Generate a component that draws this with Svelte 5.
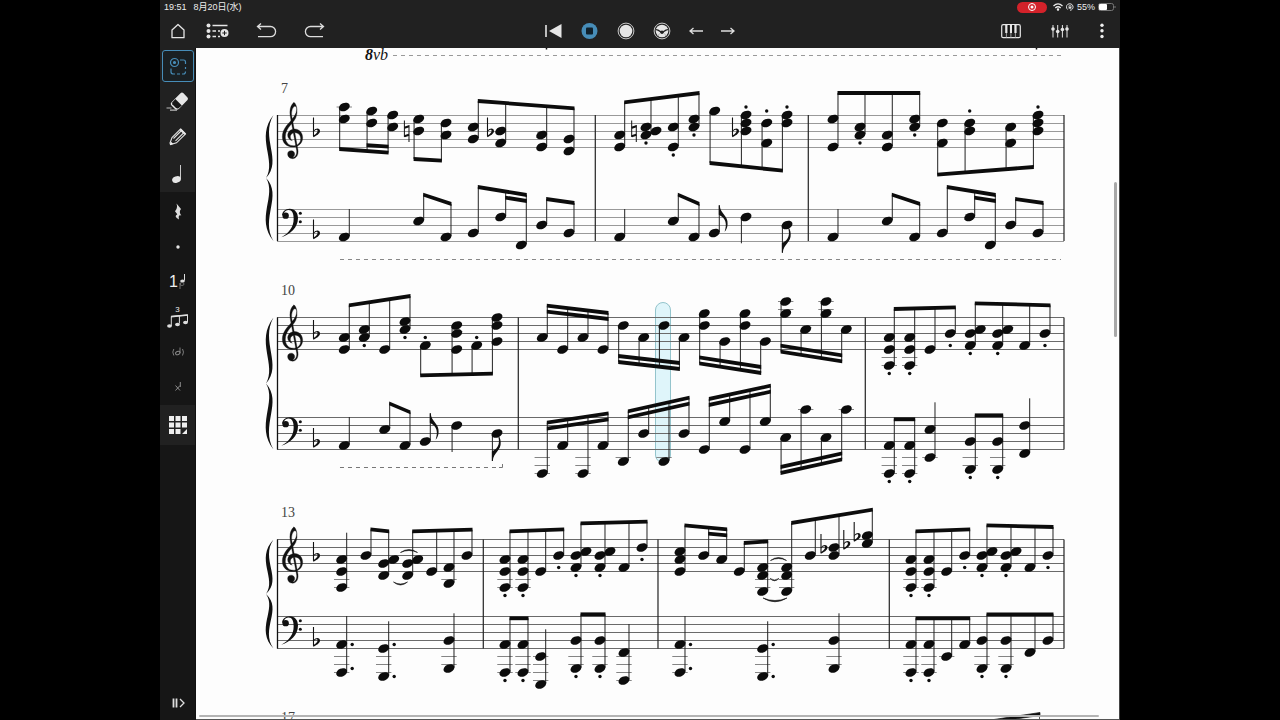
<script>
  const UP = 1;
  const DOWN = -1;
  const STAFF_LEFT = 277;
  const STAFF_RIGHT = 1064;

  // note: [x, staff steps below the top line, staccato step, step of the displaced head]
  // group: [direction, beam y at first stem, beam y at last stem, beams, notes, first note of a partial second beam]
  // single: [direction, stem end y, x, steps, options]
  const bassPattern = (x) => [
    [UP, 187, 195, 1, [[x, [6]], [x + 27.4, [2]], [x + 48, [9]]], 1],
    [UP, 199, 203, 1, [[x + 68.4, [4]], [x + 95.7, [6]]]]
  ];

  const systems = [
    {
      number: '7', numberY: 93, treble: 115, bass: 209, tone: '#999',
      bars: [595.3, 808.3],
      trebleGroups: [
        [DOWN, 149, 152.7, 1, [[344.3, [-2, 1]], [371.7, [-1, 2]], [392.7, [0, 3]]], 1],
        [DOWN, 159, 160.7, 1, [[418.7, [1, 4]], [446, [2, 5]]]],
        [UP, 101, 108.3, 1, [[473.3, [3, 6]], [500.7, [4, 7]], [541.7, [5, 8]], [569, [6, 9]]]],
        [UP, 102.3, 93, 1, [[619.7, [5, 8]], [646, [3, 5], 7, 4], [673.3, [3, 8], 10], [694, [1, 3], 5]]],
        [DOWN, 163, 170.7, 1, [[714.7, [-1]], [746, [0, 2, 4], -2], [766.7, [2, 7], -1], [787, [0, 2], -2]]],
        [UP, 93, 93, 1, [[833, [1, 8]], [860, [3, 5], 7], [887.3, [5, 8]], [914.7, [1, 3], 5]]],
        [DOWN, 174.7, 167, 1, [[942.3, [2, 7]], [969.7, [2, 4], -1], [1010.7, [3, 7]], [1038, [0, 2, 4], -2]]]
      ],
      bassGroups: [
        [UP, 194.7, 204, 1, [[418.7, [3]], [446, [7]]]],
        ...bassPattern(473.3),
        [UP, 194.7, 204, 1, [[673.3, [3]], [694, [7]]]],
        [UP, 194.7, 204, 1, [[887.3, [3]], [914.7, [7]]]],
        ...bassPattern(942.3)
      ],
      trebleSingles: [],
      bassSingles: [
        [UP, 209, 344.3, [7]], [UP, 209, 619.7, [7]], [UP, 205.3, 714.3, [6], { flag: true }],
        [DOWN, 243.3, 746, [2]], [DOWN, 252.7, 787, [4], { flag: true }], [UP, 209, 833, [7]]
      ],
      flats: [[490, 4], [735, 4]],
      naturals: [[406.7, 4], [634, 4]],
      ties: []
    },
    {
      number: '10', numberY: 295, treble: 317.5, bass: 417.5, tone: '#6a6a6a',
      bars: [518.3, 865.3],
      trebleGroups: [
        [UP, 305.3, 296, 1, [[344.3, [5, 8]], [364.3, [3, 5], 7], [384.7, [8]], [405, [1, 3], 5]]],
        [DOWN, 375.3, 373.7, 1, [[425.3, [7], 5], [456.7, [2, 4, 8]], [476.7, [7], 5], [497, [0, 2, 6]]]],
        [UP, 305.7, 313, 2, [[542.3, [5]], [562.7, [8]], [583, [5]], [603, [8]]]],
        [DOWN, 362, 369, 2, [[623.3, [2]], [643.7, [5]], [664, [2]], [684, [5]]]],
        [DOWN, 363.3, 373, 2, [[704.3, [-1, 2]], [724.7, [6]], [745, [-1, 2]], [765.3, [6]]]],
        [DOWN, 351.7, 361.3, 2, [[785.7, [-4, -1]], [805.7, [3]], [826, [-4, -1]], [846.3, [3]]]],
        [UP, 309, 307.3, 1, [[889.3, [5, 8, 12], 14], [909.7, [5, 8, 12], 14], [930, [8]], [950.3, [4], 7]]],
        [UP, 303.3, 305.3, 1, [[970.3, [4, 7], 9, 3], [997.7, [4, 7], 9, 3], [1024.7, [7]], [1045, [4], 7]]]
      ],
      bassGroups: [
        [UP, 403.3, 412.3, 1, [[384.7, [3]], [405, [7]]]],
        [UP, 422.7, 413.3, 2, [[542.3, [14]], [562.7, [7]], [583, [14]], [603, [7]]]],
        [UP, 411.3, 397.7, 2, [[623.3, [11]], [643.7, [4]], [664, [11]], [684, [4]]]],
        [UP, 399, 385.7, 2, [[704.3, [8]], [724.7, [1]], [745, [8]], [765.3, [1]]]],
        [DOWN, 473, 459.3, 2, [[785.7, [5]], [805.7, [-2]], [826, [5]], [846.3, [-2]]]],
        [UP, 419.3, 419.3, 1, [[889.3, [7, 14], 16], [909.7, [7, 14], 16]]],
        [UP, 415.3, 415.3, 1, [[970.3, [6, 13], 15], [997.7, [6, 13], 15]]]
      ],
      trebleSingles: [],
      bassSingles: [
        [UP, 417, 344.3, [7]], [UP, 413.3, 425.3, [6], { flag: true }], [DOWN, 452, 456.7, [2]],
        [DOWN, 461, 497, [4], { flag: true }], [UP, 402.3, 930, [3, 10]], [UP, 398.3, 1024.7, [2, 9]]
      ],
      flats: [], naturals: [], ties: []
    },
    {
      number: '13', numberY: 517, treble: 539.5, bass: 616.5, tone: '#6a6a6a',
      bars: [483.3, 658, 889.3],
      trebleGroups: [
        [UP, 529.3, 531.3, 1, [[366, [4]], [383.7, [6, 9], null, 5]]],
        [UP, 531.3, 529.7, 1, [[407.7, [6, 9], null, 5], [431.7, [8]], [449, [7, 11]], [467, [4]]]],
        [UP, 531.3, 529.3, 1, [[505, [5, 8, 12], 14], [523, [5, 8, 12], 14], [540.7, [8]], [558.7, [4], 7]]],
        [UP, 523.3, 521.7, 1, [[576, [4, 7], 9, 3], [600, [4, 7], 9, 3], [624, [7]], [642, [2], 5]]],
        [UP, 525.3, 529.3, 1, [[680, [3, 5, 8]], [703.7, [4]], [721.7, [5]]], 1],
        [UP, 543, 541.3, 1, [[739.3, [8]], [762.7, [7, 9, 13]]]],
        [UP, 523, 509.7, 1, [[786.7, [7, 9, 13]], [810.3, [4]], [834, [2, 4]], [867.3, [-1, 1]]]],
        [UP, 531.3, 529.3, 1, [[911, [5, 8, 12], 14], [929, [5, 8, 12], 14], [946.7, [8]], [964.7, [4], 7]]],
        [UP, 525.3, 527, 1, [[982, [4, 7], 9, 3], [1006, [4, 7], 9, 3], [1030, [7]], [1048, [4], 7]]]
      ],
      bassGroups: [
        [UP, 618.3, 618.3, 1, [[505, [7, 14], 16], [523, [7, 14], 16]]],
        [UP, 614.3, 614.3, 1, [[576, [6, 13], 15], [600, [6, 13], 15]]],
        [UP, 618.3, 618.3, 1, [[911, [7, 14], 16], [929, [7, 14], 16], [946.7, [10]], [964.7, [7]]]],
        [UP, 614.3, 614.3, 1, [[982, [6, 13], 15], [1006, [6, 13], 15], [1030, [9]], [1048, [6]]]]
      ],
      trebleSingles: [[UP, 532.7, 341.7, [5, 8, 12]]],
      bassSingles: [
        [UP, 616, 341.7, [7, 14], { dots: [7, 13] }], [UP, 621.3, 383.7, [8, 15], { dots: [7, 15] }],
        [UP, 613.3, 449, [6, 13]], [UP, 629.3, 540.7, [10, 17]], [UP, 624, 624, [9, 16]],
        [UP, 616, 680, [7, 14], { dots: [7, 13] }], [UP, 621.3, 762.7, [8, 15], { dots: [7, 15] }],
        [UP, 613.3, 834, [6, 13]]
      ],
      flats: [[823.5, 2], [846.3, 1], [856.7, -1]],
      naturals: [],
      ties: [[400.5, 417.5, 552.5, -4], [393.5, 407.5, 582, 4], [770.5, 786.5, 560.5, -4], [770, 779, 578.5, 3], [763, 787, 598, 5]]
    }
  ];

  const stemX = (x, dir) => x + (dir === UP ? 5 : -4.6);

  function ledgersFor(x, steps, top) {
    const lines = [];
    const low = Math.max(...steps);
    const high = Math.min(...steps);
    for (let p = 10; p <= low; p += 2) lines.push([x, top + p * 4]);
    for (let p = -2; p >= high; p -= 2) lines.push([x, top + p * 4]);
    return lines;
  }

  function engrave(top, groups, singles) {
    const out = { heads: [], stems: [], beams: [], dots: [], ledgers: [], flags: [] };
    const bar = (x1, y1, x2, y2) =>
      `${x1 - 0.5},${y1 - 1.9} ${x2 + 0.5},${y2 - 1.9} ${x2 + 0.5},${y2 + 1.9} ${x1 - 0.5},${y1 + 1.9}`;
    for (const [dir, y1, y2, count, notes, partial] of groups) {
      const a = stemX(notes[0][0], dir);
      const b = stemX(notes[notes.length - 1][0], dir);
      const at = (x) => y1 + ((y2 - y1) * (x - a)) / (b - a);
      out.beams.push(bar(a, y1, b, y2));
      const from = count === 2 ? 0 : partial;
      if (from !== undefined) {
        const c = stemX(notes[from][0], dir);
        out.beams.push(bar(c, at(c) + 6 * dir, b, y2 + 6 * dir));
      }
      for (const [x, steps, dot, displaced] of notes) {
        const s = stemX(x, dir);
        const base = top + 4 * (dir === UP ? Math.max(...steps) : Math.min(...steps));
        out.stems.push([s, base - dir, at(s)]);
        for (const p of steps) out.heads.push([x, top + p * 4]);
        if (displaced != null) out.heads.push([x + 10, top + displaced * 4]);
        if (dot != null) out.dots.push([x, top + dot * 4]);
        out.ledgers.push(...ledgersFor(x, steps, top));
      }
    }
    for (const [dir, end, x, steps, options = {}] of singles) {
      const s = stemX(x, dir);
      const base = top + 4 * (dir === UP ? Math.max(...steps) : Math.min(...steps));
      out.stems.push([s, base - dir, end]);
      for (const p of steps) out.heads.push([x, top + p * 4]);
      for (const p of options.dots ?? []) out.dots.push([x + 10.5, top + p * 4]);
      if (options.flag) out.flags.push([s, end, dir]);
      out.ledgers.push(...ledgersFor(x, steps, top));
    }
    return out;
  }

  function brace(t, b) {
    const h = b - t;
    const m = t + h / 2;
    return `M273.5 ${t}C255 ${t + h * 0.18} 277 ${t + h * 0.36} 266 ${m}C283 ${t + h * 0.36} 260 ${t + h * 0.18} 273.5 ${t}Z` +
      `M273.5 ${b}C255 ${b - h * 0.18} 277 ${b - h * 0.36} 266 ${m}C283 ${b - h * 0.36} 260 ${b - h * 0.18} 273.5 ${b}Z`;
  }

  const score = systems.map((s) => ({
    ...s,
    bottom: s.bass + 32,
    parts: [engrave(s.treble, s.trebleGroups, s.trebleSingles), engrave(s.bass, s.bassGroups, s.bassSingles)]
  }));
</script>

{#snippet flat(x, y)}
  <g transform="translate({x} {y})">
    <path d="M-2.5 -13.5V5.300" fill="none" stroke="#111" stroke-width="1.100" />
    <path d="M-2.400 -.2C-.4 -3.200 4.200 -3.200 4 .3C3.800 2.800 .5 4.900 -2.800 6.200V4.600C-.6 3.400 1.600 1.800 1.600 0C1.600 -2 -.8 -1.500 -2.400 1.200Z" fill="#111" />
  </g>
{/snippet}

{#snippet clef(kind, top)}
  {#if kind === 'treble'}
    <path transform="translate(160 {top - 115}) scale(.33333)" fill="#111" stroke="#111" stroke-width="1" d="M402 307C412 314 416 344 403 361C392 376 377 388 376 410C376 427 386 437 400 437C413 437 422 429 422 416C422 404 414 398 405 398C396 398 391 404 391 410C391 416 394 419 397 422C388 420 383 413 383 405C384 394 393 387 404 387C418 387 428 399 428 413C428 430 415 441 399 441C380 441 367 429 367 410C367 390 380 376 392 363C400 353 410 342 410 328C410 321 407 318 404 319C397 322 394 334 395 346L414 450C416 466 408 476 398 476C389 476 383 470 383 462C383 455 388 452 394 452C400 452 404 457 404 462C404 467 401 470 398 472C406 472 411 464 410 452L391 350C388 332 391 316 402 307Z" />
  {:else}
    <g transform="translate(160 {top - 29}) scale(.33333)" fill="#111">
      <path d="M366 108C366 95 376 86 389 86C405 86 414 98 414 114C414 142 392 163 364 172C388 158 401 140 401 116C401 100 396 90 386 90C379 90 373 95 371 101Z" />
      <circle cx="377" cy="107" r="9.500" /><circle cx="421" cy="100" r="4.500" /><circle cx="421" cy="125" r="4.500" />
    </g>
  {/if}
{/snippet}

<div class="stage">
  <div class="app">
    <header>
      <div class="status">
        <span class="clock">19:51</span><span>8月20日(水)</span>
        <span class="spacer"></span>
        <span class="recording">
          <svg width="10" height="10" viewBox="0 0 10 10"><circle cx="5" cy="5" r="3.500" fill="none" stroke="#fff" /><circle cx="5" cy="5" r="1.500" fill="#fff" /></svg>
        </span>
        <svg width="10" height="8" viewBox="0 0 10 8" fill="none" stroke="#eee" stroke-width="1.300"><path d="M.5 3Q5 -1.200 9.500 3M2.300 5Q5 2.600 7.700 5" /><circle cx="5" cy="6.600" r=".6" fill="#eee" /></svg>
        <svg width="8" height="8" viewBox="0 0 8 8" fill="none" stroke="#ddd"><path d="M1.600 6.500A3.300 3.300 0 1 1 4 7.300" /><path d="M3 4V2.600Q4 1.400 5 2.600V4" stroke-width=".7" /><rect x="2.600" y="3.700" width="2.800" height="2" fill="#ddd" stroke="none" /></svg>
        <span>55%</span>
        <svg width="18" height="8" viewBox="0 0 18 8"><rect x=".5" y=".5" width="15" height="7" rx="2" fill="none" stroke="#777" /><rect x="1" y="1" width="8" height="6" rx="1" fill="#fff" /><path d="M17 3V5" stroke="#777" /></svg>
      </div>
      <nav class="toolbar" aria-label="Score tools">
        <div class="tools left">
          <button aria-label="Home"><svg width="16" height="18" viewBox="0 0 16 18" fill="none" stroke="#e6e6e6" stroke-width="1.300"><path d="M8 2.500L14 8V15.700H2V8Z" stroke-linejoin="round" /></svg></button>
          <button aria-label="Add part"><svg width="26" height="18" viewBox="0 0 26 18" fill="#e6e6e6" stroke="#e6e6e6"><g stroke="none"><circle cx="2.500" cy="3.500" r="2" /><circle cx="2.500" cy="9" r="2" /><circle cx="2.500" cy="14.500" r="2" /><circle cx="18.500" cy="11" r="4" /></g><path d="M6.500 3.500H21.500M6.500 9H10M6.500 14.500H10" stroke-width="1.600" /><path d="M12 9H14M12 14.500H14" stroke-width="1.300" /><path d="M18.500 8.800V13.200M16.300 11H20.700" stroke="#212121" stroke-width="1" /></svg></button>
          <button aria-label="Undo"><svg width="28" height="18" viewBox="0 0 28 18" fill="none" stroke="#ddd" stroke-width="1.300"><path d="M5.500 4.500H18.500A5 5 0 0 1 18.500 14.700H6M9 1.500L5.500 4.500L9 7.500" /></svg></button>
          <button aria-label="Redo"><svg width="28" height="18" viewBox="0 0 28 18" fill="none" stroke="#ddd" stroke-width="1.300"><path d="M23.500 4.500H10.500A5 5 0 0 0 10.500 14.700H23M20 1.500L23.500 4.500L20 7.500" /></svg></button>
        </div>
        <div class="tools centre">
          <button aria-label="Back to start"><svg width="18" height="18" viewBox="0 0 18 18"><path d="M1 3V15" stroke="#e6e6e6" stroke-width="1.600" /><path d="M16.500 2V16L4 9Z" fill="#e6e6e6" /></svg></button>
          <button aria-label="Stop"><svg width="18" height="18" viewBox="0 0 18 18"><circle cx="8.500" cy="9" r="8" fill="#478db8" /><rect x="5" y="5.500" width="7" height="7" rx="1" fill="#10202b" /></svg></button>
          <button aria-label="Record"><svg width="18" height="18" viewBox="0 0 18 18"><circle cx="9" cy="9" r="7.900" fill="none" stroke="#ddd" stroke-width=".9" /><circle cx="9" cy="9" r="6.300" fill="#e6e6e6" /></svg></button>
          <button aria-label="Metronome"><svg width="18" height="18" viewBox="0 0 18 18"><circle cx="9" cy="9" r="7.900" fill="none" stroke="#ddd" stroke-width=".9" /><circle cx="9" cy="9" r="6.300" fill="#e6e6e6" /><path d="M2.700 7.500L5 8.200L9 10.500L13 8.200L15.300 7.500" fill="none" stroke="#212121" stroke-width="1.300" /><circle cx="9" cy="10.200" r="1.700" fill="#212121" /><path d="M6.500 11.500L5 14M11.500 11.500L13 14" stroke="#999" stroke-width=".7" /></svg></button>
          <button aria-label="Previous"><svg width="14" height="18" viewBox="0 0 14 18" fill="none" stroke="#ddd" stroke-width="1.300"><path d="M14 9H1M4.500 6L1 9L4.500 12" /></svg></button>
          <button aria-label="Next"><svg width="14" height="18" viewBox="0 0 14 18" fill="none" stroke="#ddd" stroke-width="1.300"><path d="M0 9H13M9.500 6L13 9L9.500 12" /></svg></button>
        </div>
        <div class="tools right">
          <button aria-label="Keyboard"><svg width="20" height="18" viewBox="0 0 20 18"><rect x=".7" y="2.700" width="18.600" height="13" rx="1.500" fill="none" stroke="#e6e6e6" stroke-width="1.200" /><path d="M5.400 3V11M9.900 3V11M14.400 3V11" stroke="#e6e6e6" stroke-width="2.400" /><path d="M5.400 11V16M9.900 11V16M14.400 11V16" stroke="#bbb" stroke-width=".8" /><path d="M7.700 3V11M12.200 3V11" stroke="#111" stroke-width="2" /></svg></button>
          <button aria-label="Mixer"><svg width="18" height="18" viewBox="0 0 18 18" stroke="#e6e6e6"><path d="M2 3V15.500M6.700 3V15.500M11.400 3V15.500M16 3V15.500" stroke-width="1" /><g stroke="none" fill="#e6e6e6"><circle cx="2" cy="7" r="1.800" /><circle cx="6.700" cy="9.500" r="1.800" /><circle cx="11.400" cy="7.500" r="1.800" /><circle cx="16" cy="7" r="1.800" /></g></svg></button>
          <button aria-label="More"><svg width="6" height="18" viewBox="0 0 6 18" fill="#eee"><circle cx="3" cy="3.200" r="1.700" /><circle cx="3" cy="8.800" r="1.700" /><circle cx="3" cy="14.500" r="1.700" /></svg></button>
        </div>
      </nav>
    </header>

    <div class="workspace">
      <aside>
        <div class="section lit">
          <button class="selected" aria-label="Select"><svg width="20" height="20" viewBox="0 0 20 20" fill="none" stroke="#478db8" stroke-width="1.200"><circle cx="6.500" cy="6.500" r="4" /><circle cx="6.500" cy="6.500" r="1" fill="#478db8" /><path d="M12 4H15.500Q17.500 4 17.500 6V8M17.500 11V13M17.500 15.500Q17.500 18 15.500 18H14M12 18H9M7 18H5.500Q3 18 3 16V12.500" /></svg></button>
          <button aria-label="Eraser"><svg width="24" height="24" viewBox="0 0 24 24"><path d="M14.500 3.200Q16 2 17.500 3.300L21.500 7.500Q22.500 8.800 21.500 10L13 18.800Q11.500 20 9.500 19.500L5 15Q4.300 13.500 5.500 12.300Z" fill="#e6e6e6" /><path d="M9.300 9L15.800 15.500L12.500 18.200Q11.300 18.800 10 18L6.300 14.300Q5.800 13 6.500 12.200Z" fill="#181818" /><path d="M.5 18H5.500M4 20.200H11" stroke="#bbb" stroke-width="1.200" /></svg></button>
          <button aria-label="Pencil"><svg width="22" height="22" viewBox="0 0 22 22" fill="none" stroke="#ddd" stroke-width="1.100"><path d="M3 16L5 10.500L13.500 2L18.500 7L9.500 15.800L3.500 17.500Z" /><path d="M6.500 11.500L14.500 3.500M8.500 13.800L16.500 6" /><path d="M12.500 3L14 1.500L19 6.500L17.500 8Z" fill="#e6e6e6" stroke="none" /><path d="M3 18L3.800 14.500L6.300 17Z" fill="#eee" stroke="none" /></svg></button>
          <button aria-label="Note"><svg width="18" height="22" viewBox="0 0 18 22"><ellipse cx="7.500" cy="16.500" rx="4.500" ry="3.200" transform="rotate(-20 7.500 16.500)" fill="#e6e6e6" /><path d="M11.500 2V16" stroke="#ddd" stroke-width=".9" /></svg></button>
        </div>
        <div class="section values">
          <button aria-label="Rest"><svg width="12" height="20" viewBox="0 0 12 20"><path d="M4.500 1.500L9 7Q6.500 9.800 9.300 13.500Q5.800 12.300 7 17.500Q1.300 14.500 5.300 12.300L3 9.300Q6 6 4.500 1.500Z" fill="#ddd" /></svg></button>
          <button aria-label="Dot"><svg width="6" height="6" viewBox="0 0 6 6"><circle cx="3" cy="3" r="1.700" fill="#e6e6e6" /></svg></button>
          <button aria-label="Voice" class="voice"><span>1</span><svg width="8" height="18" viewBox="0 0 8 18"><path d="M6.500 1V7.500" stroke="#ddd" /><ellipse cx="4.500" cy="8" rx="2.300" ry="1.600" fill="#ddd" /><path d="M2 10V16" stroke="#888" stroke-width=".8" /><ellipse cx="4" cy="11" rx="2" ry="1.500" fill="none" stroke="#888" stroke-width=".7" /></svg></button>
          <button aria-label="Triplet" class="triplet"><span>3</span><svg width="22" height="14" viewBox="0 0 22 14"><path d="M4.300 12V2.500L20.500 1V8M12.400 9.500V2" stroke="#ddd" fill="none" /><path d="M4 2.700L21 1" stroke="#ddd" stroke-width="1.700" /><g fill="#ddd"><ellipse cx="2.500" cy="12" rx="2.400" ry="1.700" /><ellipse cx="10.500" cy="10.500" rx="2.400" ry="1.700" /><ellipse cx="18.500" cy="8.500" rx="2.400" ry="1.700" /></g></svg></button>
          <button aria-label="Ghost note"><svg width="14" height="14" viewBox="0 0 14 14" fill="none" stroke="#888"><path d="M2.800 4Q.8 7 2.800 10.500M11.500 4Q13.500 7 11.500 10.500M9 2.500V8" stroke-width=".9" /><ellipse cx="6.800" cy="8" rx="2.300" ry="1.600" transform="rotate(-25 6.800 8)" /></svg></button>
          <button aria-label="Cross head"><svg width="8" height="12" viewBox="0 0 8 12" fill="none" stroke="#999"><path d="M1.500 4.500L6 9.500M6 4.500L1.500 9.500M6.300 1V6" stroke-width=".9" /></svg></button>
        </div>
        <div class="section lit palette">
          <button aria-label="Palette"><svg width="20" height="20" viewBox="0 0 20 20" fill="#eee"><path d="M1 1h5v5h-5zM7.500 1h5v5h-5zM14 1h5v5h-5zM1 7.500h5v5h-5zM7.500 7.500h5v5h-5zM14 7.500h5v5h-5zM1 14h5v5h-5zM7.500 14h5v5h-5zM19 14v5h-5z" /></svg></button>
        </div>
        <button class="expand" aria-label="Expand palette"><svg width="14" height="12" viewBox="0 0 14 12" fill="none" stroke="#ddd"><path d="M2.500 1.500V10.500M5.500 1.500V10.500" stroke-width="1.800" /><path d="M9 2L13 6L9 10" stroke-width="1.300" /></svg></button>
      </aside>

      <main>
        <svg class="score" viewBox="196 48 923 671" preserveAspectRatio="xMidYMin slice" role="img" aria-label="Piano score, measures 7 to 16">
          <rect x="655.500" y="302.500" width="15" height="160" rx="7.500" fill="#dff5fa" stroke="#93c4cc" />
          <path d="M393 55.500H1061" stroke="#999" stroke-dasharray="4 4" />
          <text x="365" y="60" class="ottava"><tspan class="eight">8</tspan>vb</text>
          <path d="M546.500 48V49.500M1036.500 48V49.500" stroke="#111" stroke-width="1.500" />
          <path d="M340 259.500H1061" stroke="#888" stroke-dasharray="4 4" />
          <path d="M340 467.500H500" stroke="#777" stroke-dasharray="4 4" /><path d="M499 467.500H502.500V464" fill="none" stroke="#777" />

          {#each score as s}
            <text x="281" y={s.numberY} class="measure">{s.number}</text>
            <path d={brace(s.treble, s.bottom)} fill="#111" />
            {#each [s.treble, s.bass] as top}
              {#each [0, 8, 16, 24, 32] as d}
                <path d="M{STAFF_LEFT} {Math.floor(top) + d + 0.5}H{STAFF_RIGHT}" stroke={s.tone} />
              {/each}
            {/each}
            <path d="M277.500 {s.treble}V{s.bottom}" stroke="#111" stroke-width="1.300" />
            {#each [...s.bars, 1064] as x}
              <path d="M{x} {s.treble}V{s.bottom}" stroke="#222" stroke-width="1.200" />
            {/each}
            {@render clef('treble', s.treble)}
            {@render clef('bass', s.bass)}
            {@render flat(316, s.treble + 16)}
            {@render flat(316, s.bass + 24)}
            {#each s.flats as [x, p]}{@render flat(x, s.treble + p * 4)}{/each}
            {#each s.naturals as [x, p]}
              <path transform="translate({x} {s.treble + p * 4})" d="M-2.300 -10.500V6M2.300 -6V11" stroke="#111" />
              <path transform="translate({x} {s.treble + p * 4})" d="M-2.300 -3.300L2.300 -4.800M-2.300 5.300L2.300 3.800" stroke="#111" stroke-width="2.200" />
            {/each}
            {#each s.parts as part}
              {#each part.ledgers as [x, y]}<path d="M{x - 7.7} {y}H{x + 7.7}" stroke="#777" stroke-width=".9" />{/each}
              {#each part.stems as [x, a, b]}<path d="M{x} {a}V{b}" stroke="#222" stroke-width="1" />{/each}
              {#each part.beams as points}<polygon {points} fill="#0c0c0c" />{/each}
              {#each part.heads as [x, y]}<ellipse cx={x} cy={y} rx="5.700" ry="4" transform="rotate(-22 {x} {y})" fill="#0c0c0c" />{/each}
              {#each part.dots as [x, y]}<circle cx={x} cy={y} r="1.700" fill="#0c0c0c" />{/each}
              {#each part.flags as [x, y, dir]}
                <path transform="translate({x} {y}) scale(1 {dir})" d="M-.5 0H.4C1 9 9 10 8.300 19C8.100 22.500 6.800 25 5.300 26.500C7.800 19 7 13 -.5 9.500Z" fill="#111" />
              {/each}
            {/each}
            {#each s.ties as [a, b, y, h]}
              <path d="M{a} {y}Q{(a + b) / 2} {y + h} {b} {y}Q{(a + b) / 2} {y + h * 1.5} {a} {y}Z" fill="#111" stroke="#111" stroke-width=".6" />
            {/each}
          {/each}

          <text x="281" y="722" class="measure">17</text>
          <path d="M994 719.500L1040 712.500V715.500L1012 719.500ZM1039.500 713V720" fill="#111" stroke="#111" stroke-width=".7" />
        </svg>
        <span class="scroll vertical"></span>
        <span class="scroll horizontal"></span>
      </main>
    </div>
  </div>
</div>

<style>
  :global(body) { margin: 0; background: #000; }
  .stage { display: flex; justify-content: center; height: 100vh; background: #000; }
  .app { display: flex; flex-direction: column; width: 100%; max-width: 133.3333vh; overflow: hidden; color: #eee; background: #212121; font-family: "Liberation Sans", "Noto Sans CJK JP", sans-serif; }
  header { flex: none; }
  .status { display: flex; align-items: center; gap: 3px; height: 14px; padding: 0 4px; font-size: 9px; line-height: 14px; }
  .clock { margin-right: 4px; }
  .spacer { flex: 1; }
  .recording { display: flex; align-items: center; justify-content: center; width: 30px; height: 11px; margin-right: 3px; border-radius: 6px; background: #d3222a; }
  .toolbar { display: grid; grid-template-columns: 1fr auto 1fr; align-items: center; height: 34px; }
  .tools { display: flex; align-items: center; }
  .left { gap: 20px; padding-left: 10px; }
  .centre { gap: 18px; }
  .right { gap: 30px; justify-content: flex-end; padding-right: 15px; }
  button { display: flex; align-items: center; justify-content: center; margin: 0; padding: 0; border: 0; background: none; color: inherit; font: inherit; }
  svg { display: block; flex: none; }
  .workspace { display: flex; flex: 1; min-height: 0; }
  aside { display: flex; flex: none; flex-direction: column; width: 36px; border-right: 1px solid #111; box-sizing: border-box; background: #161616; }
  .section button { width: 100%; height: 36px; }
  .lit { background: #212121; }
  .section .selected { box-sizing: border-box; width: 32px; height: 32px; margin: 2px; border: 1px solid #478db8; border-radius: 3px; background: #1a2023; }
  .values { padding: 2px 0 1px; }
  .values button { height: 35px; }
  .voice span { font-size: 16px; line-height: 18px; }
  .section .triplet { flex-direction: column; }
  .triplet span { font-size: 8px; line-height: 8px; }
  .palette button { height: 40px; }
  .expand { width: 100%; height: 34px; margin-top: auto; }
  main { position: relative; flex: 1; min-width: 0; overflow: hidden; border-right: 1px solid #444; border-bottom: 1px solid #555; background: #fdfdfd; }
  .score { width: 100%; height: 100%; }
  .measure { font-family: "Liberation Serif", serif; font-size: 14px; fill: #444; }
  .ottava { font-family: "Liberation Serif", serif; font-size: 16px; font-style: italic; fill: #111; }
  .eight { font-weight: bold; }
  .scroll { position: absolute; border-radius: 2px; background: #a8a8a8; }
  .vertical { top: 20%; right: 2px; width: 3px; height: 23%; }
  .horizontal { left: 3px; right: 20px; bottom: 2px; height: 2px; background: #b4b4b4; }
</style>
